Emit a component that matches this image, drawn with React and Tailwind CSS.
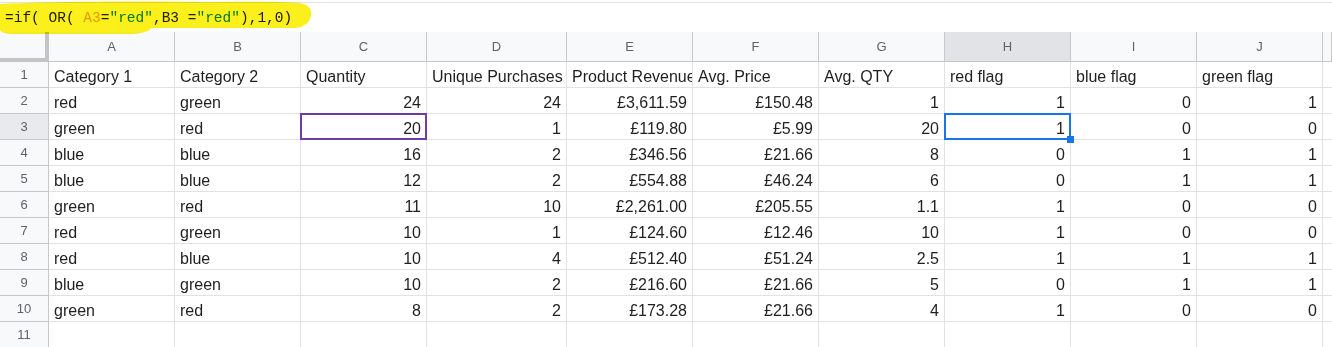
import React from 'react';

const cols = ['A', 'B', 'C', 'D', 'E', 'F', 'G', 'H', 'I', 'J', ''];

const headers = ['Category 1', 'Category 2', 'Quantity', 'Unique Purchases', 'Product Revenue', 'Avg. Price', 'Avg. QTY', 'red flag', 'blue flag', 'green flag'];

const rows = [
  ['red', 'green', '24', '24', '£3,611.59', '£150.48', '1', '1', '0', '1'],
  ['green', 'red', '20', '1', '£119.80', '£5.99', '20', '1', '0', '0'],
  ['blue', 'blue', '16', '2', '£346.56', '£21.66', '8', '0', '1', '1'],
  ['blue', 'blue', '12', '2', '£554.88', '£46.24', '6', '0', '1', '1'],
  ['green', 'red', '11', '10', '£2,261.00', '£205.55', '1.1', '1', '0', '0'],
  ['red', 'green', '10', '1', '£124.60', '£12.46', '10', '1', '0', '0'],
  ['red', 'blue', '10', '4', '£512.40', '£51.24', '2.5', '1', '1', '1'],
  ['blue', 'green', '10', '2', '£216.60', '£21.66', '5', '0', '1', '1'],
  ['green', 'red', '8', '2', '£173.28', '£21.66', '4', '1', '0', '0'],
];

const grid = 'grid grid-cols-[49px_126px_126px_126px_140px_126px_126px_126px_126px_126px_126px_1fr]';

function FormulaBar() {
  return (
    <div className="relative h-[32px] pt-[2px]">
      <div className="h-[30px] border-t border-[#e3e3e3] flex items-center pl-[5px] pt-[3px] font-['Liberation_Mono',monospace] text-[14.5px] text-[#202124] whitespace-pre">
        <span>=if( OR( </span>
        <span className="text-[#f29f05]">A3</span>
        <span>=</span>
        <span className="text-[#0b8043]">"red"</span>
        <span>,B3 =</span>
        <span className="text-[#0b8043]">"red"</span>
        <span>),1,0)</span>
      </div>
      {/* highlighter mark drawn over the screenshot */}
      <svg className="absolute left-0 top-0 z-30 mix-blend-multiply pointer-events-none" width="320" height="36" viewBox="0 0 320 36">
        <path
          d="M0 4 C 40 2, 120 1, 200 2 C 250 2, 290 1, 304 4 Q 313 8, 311 16 Q 309 26, 296 28 L 152 28 Q 146 34, 128 34 L 14 34 Q 2 34, 0 30 Z"
          fill="#fbf01c"
        />
      </svg>
    </div>
  );
}

function HeaderRow() {
  return (
    <div className={`${grid} h-[30px] font-['Liberation_Sans',Arial,sans-serif] text-[13px] text-[#5f6368]`}>
      <div className="bg-[#f8f9fa] border-r-[4px] border-b-[4px] border-[#c4c4c4]" />
      {cols.map((c, i) => (
        <div
          key={i}
          className={`flex items-center justify-center border-r border-b border-[#c8c8c8] ${c === 'H' ? 'bg-[#e1e3e6]' : 'bg-[#f8f9fa]'}`}
        >
          {c}
        </div>
      ))}
    </div>
  );
}

function Cell({ value, right, sel }) {
  return (
    <div className={`relative flex items-end pb-[1px] border-r border-b border-[#e2e2e3] ${right ? 'justify-end pr-[5px]' : 'pl-[5px]'} ${sel ? 'z-10' : ''}`}>
      <span className="whitespace-nowrap overflow-hidden leading-[18px]">{value}</span>
      {sel === 'purple' && (
        <div className="absolute top-[-1px] left-[-1px] right-[-1px] bottom-[-1px] border-2 border-[#6a3ea5]" />
      )}
      {sel === 'blue' && (
        <div className="absolute top-[-1px] left-[-1px] right-[-1px] bottom-[-1px] border-2 border-[#1a73e8]">
          <div className="absolute right-[-5px] bottom-[-5px] w-[7px] h-[7px] bg-[#1a73e8]" />
        </div>
      )}
    </div>
  );
}

function Row({ n, values }) {
  return (
    <div className={`${grid} h-[26px]`}>
      <div className={`flex items-center justify-center border-r border-b border-[#c8c8c8] text-[13px] text-[#5f6368] ${n === 3 ? 'bg-[#e8eaed]' : 'bg-[#f8f9fa]'}`}>
        {n}
      </div>
      {values.map((v, i) => {
        const isNum = n > 1 && i >= 2;
        let sel = null;
        if (n === 3 && i === 2) sel = 'purple';
        if (n === 3 && i === 7) sel = 'blue';
        return <Cell key={i} value={v} right={isNum} sel={sel} />;
      })}
      <div className="border-b border-[#e2e2e3]" />
    </div>
  );
}

export default function App() {
  return (
    <div className="w-[1332px] h-[347px] overflow-hidden bg-white text-[16px] text-[#1f1f1f] font-['Liberation_Sans',Arial,sans-serif]">
      <FormulaBar />
      <HeaderRow />
      <Row n={1} values={headers} />
      {rows.map((r, i) => (
        <Row key={i} n={i + 2} values={r} />
      ))}
      <Row n={11} values={Array(10).fill('')} />
    </div>
  );
}
